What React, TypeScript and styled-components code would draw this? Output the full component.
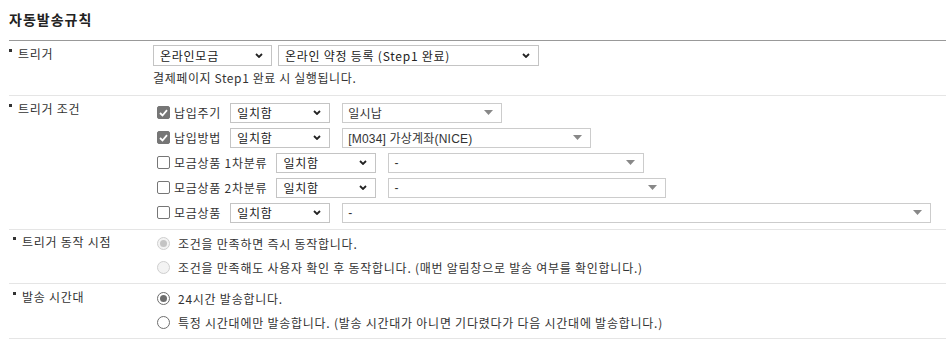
import React from "react";
import styled, { createGlobalStyle } from "styled-components";

const GlobalStyle = createGlobalStyle`
  body {
    margin: 0;
    font-family: "Noto Sans CJK KR", "Noto Sans", sans-serif;
    font-size: 12px;
    letter-spacing: 0.75px;
    color: #333333;
    background: #ffffff;
  }
`;

const Wrapper = styled.div`
  padding: 8px 0 0 9px;
`;

const Title = styled.h3`
  margin: 0;
  height: 32px;
  line-height: 22px;
  font-size: 14px;
  font-weight: 700;
  letter-spacing: 1px;
  color: #222222;
`;

const Table = styled.div`
  border-top: 1px solid #999999;
`;

const Row = styled.div<{ $pt: number; $pb: number }>`
  display: grid;
  grid-template-columns: 144px 1fr;
  border-bottom: 1px solid #e5e5e5;
  padding: ${(p) => p.$pt}px 0 ${(p) => p.$pb}px 0;
`;

const Label = styled.div<{ $top: number }>`
  display: flex;
  align-items: flex-start;
  gap: 6px;
  padding: ${(p) => p.$top}px 0 0 4px;
  line-height: 18px;
  color: #333333;

  &::before {
    content: "";
    width: 3px;
    height: 3px;
    margin-top: 4px;
    background: #333333;
  }
`;

const Cell = styled.div`
  display: flex;
  flex-direction: column;
`;

const Line = styled.div<{ $h?: number }>`
  display: flex;
  align-items: center;
  height: ${(p) => p.$h ?? 25}px;
  padding-left: 4px;
`;

const SelectRow = styled.div`
  display: flex;
  gap: 6px;
`;

const Hint = styled.div`
  margin-top: 3px;
  line-height: 18px;
  letter-spacing: 0.6px;
  color: #333333;
`;

const NativeSelect = styled.div<{ $w: number; $h?: number }>`
  box-sizing: border-box;
  display: flex;
  align-items: center;
  justify-content: space-between;
  width: ${(p) => p.$w}px;
  height: ${(p) => p.$h ?? 20}px;
  padding: 0 8px 0 6px;
  border: 1px solid #c4c4c4;
  background: #ffffff;
  color: #222222;
  flex-shrink: 0;
`;

const ComboBox = styled.div<{ $w: number }>`
  box-sizing: border-box;
  display: flex;
  align-items: center;
  justify-content: space-between;
  width: ${(p) => p.$w}px;
  height: 20px;
  margin-left: 12px;
  padding: 0 8px 0 5px;
  border: 1px solid #cccccc;
  background: #ffffff;
  color: #333333;
  flex-shrink: 0;
  letter-spacing: 0.2px;
  font-family: "Liberation Sans", "Noto Sans CJK KR", sans-serif;
`;

const CheckBox = styled.span<{ $checked?: boolean }>`
  box-sizing: border-box;
  display: inline-flex;
  align-items: center;
  justify-content: center;
  width: 13px;
  height: 13px;
  border-radius: 2px;
  border: 1px solid #767676;
  background: ${(p) => (p.$checked ? "#767676" : "#ffffff")};
  flex-shrink: 0;
`;

const CheckText = styled.span`
  margin: 0 9px 0 4px;
  white-space: nowrap;
`;

const Radio = styled.span<{ $checked?: boolean; $disabled?: boolean }>`
  box-sizing: border-box;
  display: inline-flex;
  align-items: center;
  justify-content: center;
  width: 13px;
  height: 13px;
  border-radius: 50%;
  border: 1px solid ${(p) => (p.$disabled ? "#cfcfcf" : "#6e6e6e")};
  background: ${(p) => (p.$disabled ? "#f3f3f3" : "#ffffff")};
  flex-shrink: 0;

  &::after {
    content: "";
    display: ${(p) => (p.$checked ? "block" : "none")};
    width: 7px;
    height: 7px;
    border-radius: 50%;
    background: ${(p) => (p.$disabled ? "#c4c4c4" : "#6e6e6e")};
  }
`;

const RadioText = styled.span`
  margin-left: 8px;
  white-space: nowrap;
`;

const Chevron = () => (
  <svg width="8" height="5" viewBox="0 0 8 5">
    <path d="M1 1 L4 4 L7 1" fill="none" stroke="#222" strokeWidth="1.8" />
  </svg>
);

const Caret = () => (
  <svg width="9" height="5" viewBox="0 0 9 5">
    <path d="M0 0 H9 L4.5 5 Z" fill="#888" />
  </svg>
);

const Check = () => (
  <svg width="9" height="8" viewBox="0 0 9 8">
    <path d="M1 4 L3.5 6.5 L8 1.2" fill="none" stroke="#fff" strokeWidth="1.8" />
  </svg>
);

type Cond = { label: string; checked: boolean; value: string; width: number };

const conditions: Cond[] = [
  { label: "납입주기", checked: true, value: "일시납", width: 160 },
  { label: "납입방법", checked: true, value: "[M034] 가상계좌(NICE)", width: 249 },
  { label: "모금상품 1차분류", checked: false, value: "-", width: 256 },
  { label: "모금상품 2차분류", checked: false, value: "-", width: 278 },
  { label: "모금상품", checked: false, value: "-", width: 589 },
];

export default function App() {
  return (
    <Wrapper>
      <GlobalStyle />
      <Title>자동발송규칙</Title>
      <Table>
        <Row $pt={4} $pb={8}>
          <Label $top={-1}>트리거</Label>
          <Cell>
            <SelectRow>
              <NativeSelect $w={119} $h={21}>
                온라인모금
                <Chevron />
              </NativeSelect>
              <NativeSelect $w={261} $h={21}>
                온라인 약정 등록 (Step1 완료)
                <Chevron />
              </NativeSelect>
            </SelectRow>
            <Hint>결제페이지 Step1 완료 시 실행됩니다.</Hint>
          </Cell>
        </Row>

        <Row $pt={4} $pb={4}>
          <Label $top={-1}>트리거 조건</Label>
          <Cell>
            {conditions.map((c) => (
              <Line key={c.label}>
                <CheckBox $checked={c.checked}>{c.checked && <Check />}</CheckBox>
                <CheckText>{c.label}</CheckText>
                <NativeSelect $w={100}>
                  일치함
                  <Chevron />
                </NativeSelect>
                <ComboBox $w={c.width}>
                  {c.value}
                  <Caret />
                </ComboBox>
              </Line>
            ))}
          </Cell>
        </Row>

        <Row $pt={1} $pb={4}>
          <Label $top={2}>트리거 동작 시점</Label>
          <Cell>
            <Line $h={24}>
              <Radio $checked $disabled />
              <RadioText>조건을 만족하면 즉시 동작합니다.</RadioText>
            </Line>
            <Line $h={24}>
              <Radio $disabled />
              <RadioText>
                조건을 만족해도 사용자 확인 후 동작합니다. (매번 알림창으로 발송 여부를 확인합니다.)
              </RadioText>
            </Line>
          </Cell>
        </Row>

        <Row $pt={2} $pb={4}>
          <Label $top={2}>발송 시간대</Label>
          <Cell>
            <Line $h={24}>
              <Radio $checked />
              <RadioText>24시간 발송합니다.</RadioText>
            </Line>
            <Line $h={24}>
              <Radio />
              <RadioText>
                특정 시간대에만 발송합니다. (발송 시간대가 아니면 기다렸다가 다음 시간대에 발송합니다.)
              </RadioText>
            </Line>
          </Cell>
        </Row>
      </Table>
    </Wrapper>
  );
}
